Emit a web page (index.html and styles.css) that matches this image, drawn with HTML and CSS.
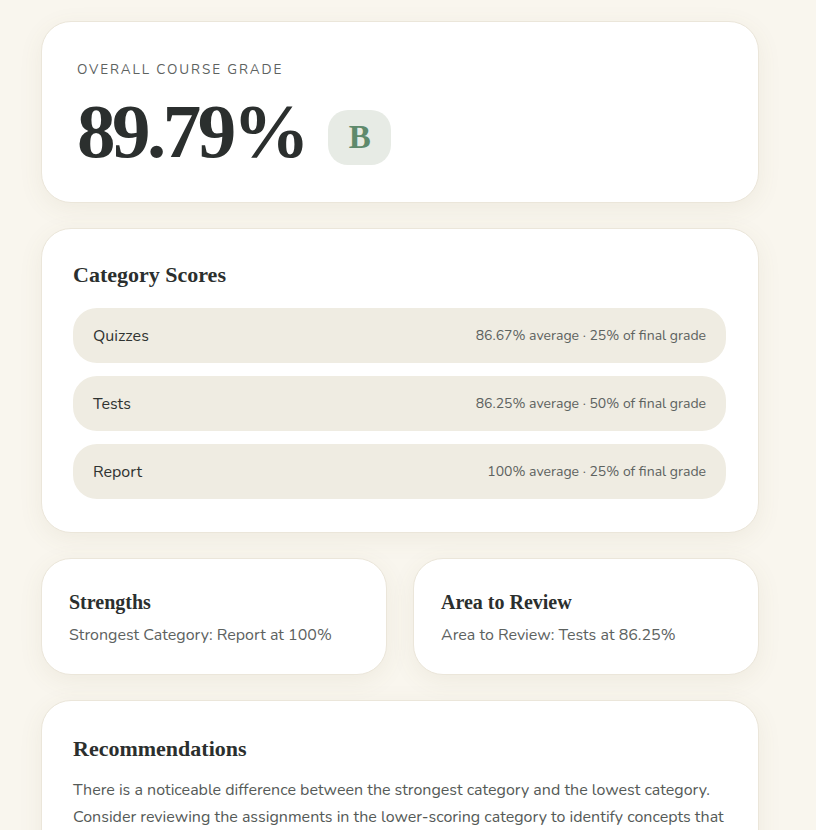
FILE: index.html
```html
<!DOCTYPE html>
<html lang="en">
<head>
    <meta charset="UTF-8">
    <meta name="viewport" content="width=device-width, initial-scale=1.0">
    <title>Course Grade Summary</title>
    <link rel="stylesheet" href="styles.css">
</head>
<body>
    <div class="page">

        <div class="card grade-card">
            <div class="eyebrow">Overall Course Grade</div>
            <div class="grade-line">
                <span class="grade-value">89.79%</span>
                <span class="grade-letter">B</span>
            </div>
        </div>

        <div class="card scores-card">
            <h2>Category Scores</h2>
            <div class="score-list">
                <div class="score-row">
                    <span class="score-name">Quizzes</span>
                    <span class="score-meta">86.67% average · 25% of final grade</span>
                </div>
                <div class="score-row">
                    <span class="score-name">Tests</span>
                    <span class="score-meta">86.25% average · 50% of final grade</span>
                </div>
                <div class="score-row">
                    <span class="score-name">Report</span>
                    <span class="score-meta">100% average · 25% of final grade</span>
                </div>
            </div>
        </div>

        <div class="pair">
            <div class="card small-card">
                <h3>Strengths</h3>
                <p>Strongest Category: Report at 100%</p>
            </div>
            <div class="card small-card">
                <h3>Area to Review</h3>
                <p>Area to Review: Tests at 86.25%</p>
            </div>
        </div>

        <div class="card rec-card">
            <h2>Recommendations</h2>
            <p>There is a noticeable difference between the strongest category and the lowest category. Consider reviewing the assignments in the lower-scoring category to identify concepts that may need more practice before the next assessment.</p>
        </div>

    </div>
</body>
</html>
```

FILE: styles.css
```css
body {
    margin: 0;
    padding: 0;
    background-color: #f9f6ee;
    font-family: "Nunito", "Lato", "Noto Sans", sans-serif;
    color: #2b2f2e;
}

.page {
    width: 718px;
    padding: 21px 0 40px 41px;
    display: flex;
    flex-direction: column;
    gap: 25px;
}

.card {
    background-color: #ffffff;
    border: 1px solid #ebe6da;
    border-radius: 30px;
    box-shadow: 0 6px 24px rgba(120, 105, 70, 0.08);
    box-sizing: border-box;
}

h2, h3 {
    font-family: "Liberation Serif", "Times New Roman", serif;
    font-weight: bold;
    color: #2b2f2e;
    margin: 0;
}

.grade-card {
    height: 182px;
    padding: 38px 36px 0 35px;
}

.eyebrow {
    font-size: 13.5px;
    letter-spacing: 1.9px;
    text-transform: uppercase;
    color: #5d625f;
}

.grade-line {
    display: flex;
    align-items: center;
    gap: 22px;
    margin-top: 7px;
}

.grade-value {
    font-family: "Liberation Serif", "Times New Roman", serif;
    font-weight: bold;
    font-size: 77px;
    line-height: 90px;
    letter-spacing: -3.5px;
    color: #2b2f2e;
}

.grade-letter {
    width: 63px;
    height: 55px;
    border-radius: 20px;
    background-color: #e7ebe5;
    color: #5f8a6c;
    font-family: "Liberation Serif", "Times New Roman", serif;
    font-weight: bold;
    font-size: 33px;
    display: flex;
    align-items: center;
    justify-content: center;
    margin-top: 12px;
}

.scores-card {
    padding: 32px 32px 33px 31px;
}

.scores-card h2 {
    font-size: 22px;
    line-height: 28px;
}

.score-list {
    display: flex;
    flex-direction: column;
    gap: 13px;
    margin-top: 19px;
}

.score-row {
    height: 55px;
    background-color: #efece2;
    border-radius: 24px;
    padding: 0 20px;
    display: flex;
    align-items: center;
    justify-content: space-between;
}

.score-name {
    font-size: 16px;
    color: #2f3331;
}

.score-meta {
    font-size: 14px;
    color: #5d625f;
}

.pair {
    display: grid;
    grid-template-columns: 1fr 1fr;
    gap: 26px;
}

.small-card {
    height: 117px;
    padding: 31px 28px 0 27px;
}

.small-card h3 {
    font-size: 20px;
    line-height: 24px;
}

.small-card p {
    margin: 10px 0 0 0;
    font-size: 16px;
    color: #5d625f;
}

.rec-card {
    padding: 35px 32px 32px 31px;
}

.rec-card h2 {
    font-size: 22px;
    line-height: 26px;
}

.rec-card p {
    margin: 15px 0 0 0;
    font-size: 16px;
    line-height: 27px;
    color: #555a57;
}
```
